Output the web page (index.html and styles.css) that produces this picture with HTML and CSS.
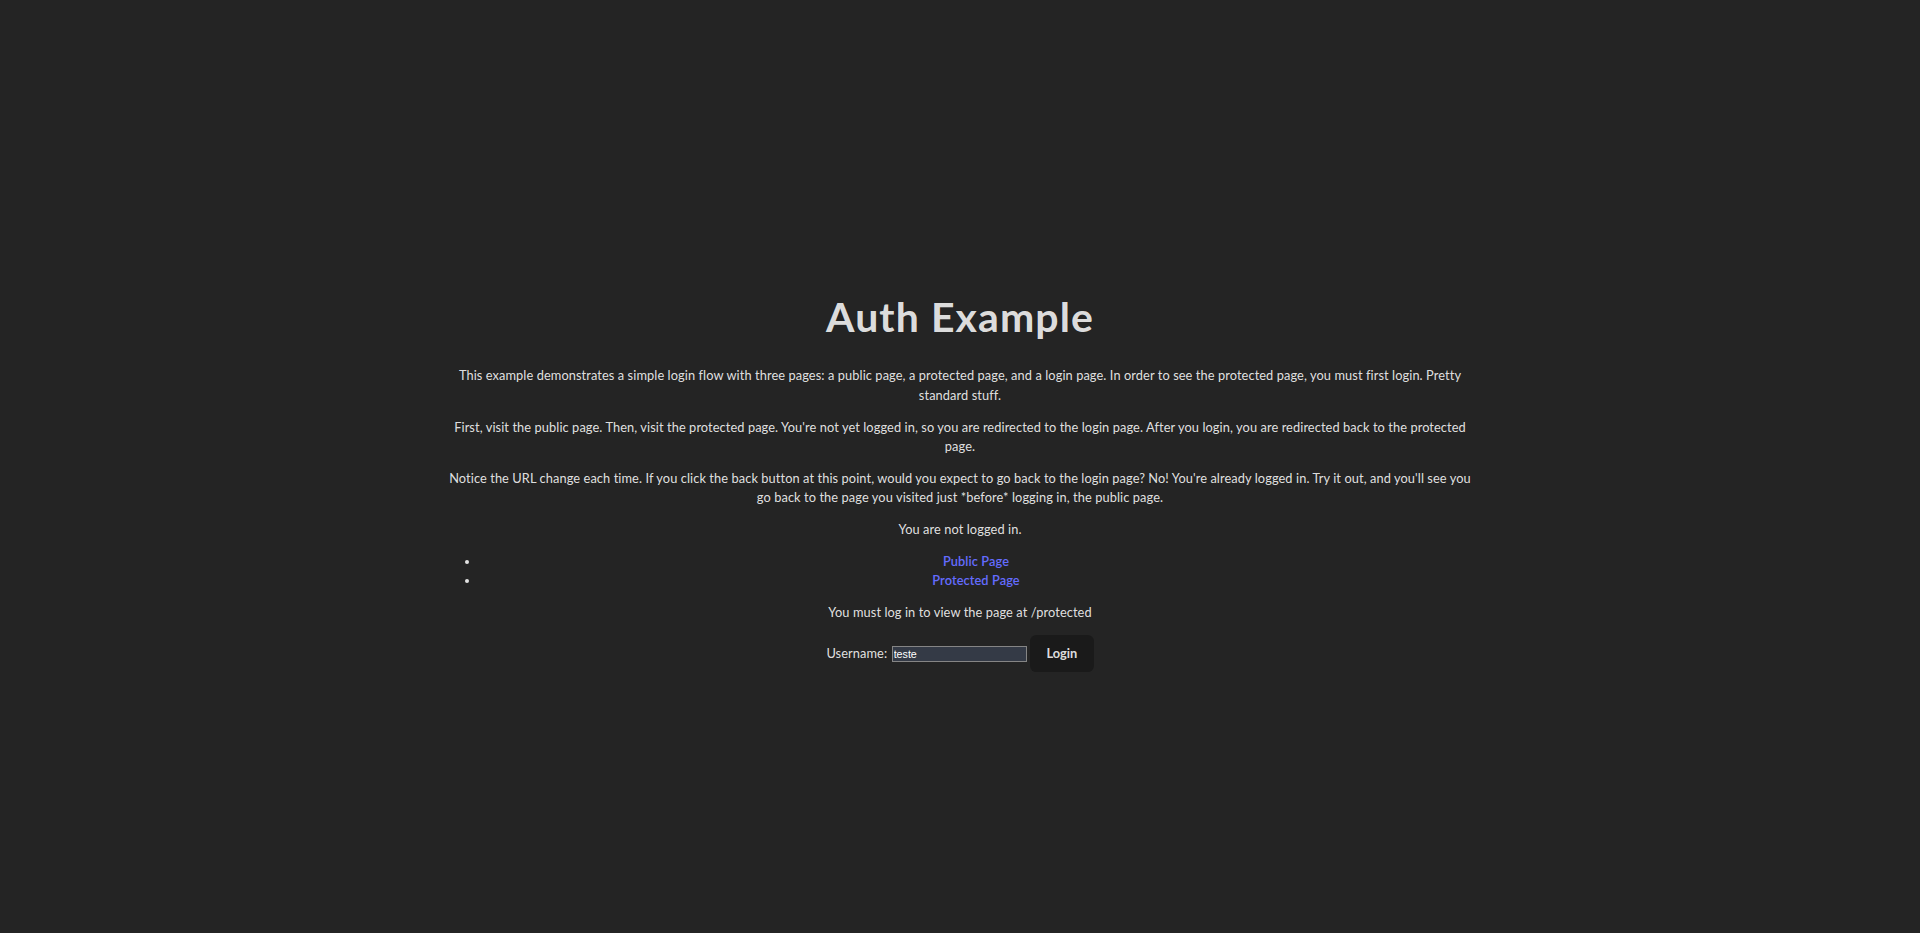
FILE: index.html
```html
<!DOCTYPE html>
<html lang="en">
<head>
<meta charset="utf-8">
<title>Auth Example</title>
<link rel="stylesheet" href="styles.css">
</head>
<body>
<div class="root">
  <h1 class="title">Auth Example</h1>
  <p class="text">This example demonstrates a simple login flow with three pages: a public page, a protected page, and a login page. In order to see the protected page, you must first login. Pretty standard stuff.</p>
  <p class="text">First, visit the public page. Then, visit the protected page. You're not yet logged in, so you are redirected to the login page. After you login, you are redirected back to the protected page.</p>
  <p class="text">Notice the URL change each time. If you click the back button at this point, would you expect to go back to the login page? No! You're already logged in. Try it out, and you'll see you go back to the page you visited just *before* logging in, the public page.</p>
  <p class="text">You are not logged in.</p>
  <ul class="nav">
    <li><a class="link" href="#/public">Public Page</a></li>
    <li><a class="link" href="#/protected">Protected Page</a></li>
  </ul>
  <div class="login">
    <p class="text">You must log in to view the page at /protected</p>
    <form class="form">
      <label class="label">Username: <input class="input" name="username" type="text" value="teste"></label> <button class="button" type="button">Login</button>
    </form>
  </div>
</div>
</body>
</html>
```

FILE: styles.css
```css
html, body {
  margin: 0;
  padding: 0;
}
body {
  background: #242424;
  color: rgba(255, 255, 255, 0.87);
  font-family: Lato, "Open Sans", sans-serif;
  font-size: 12.8px;
  line-height: 1.5;
  letter-spacing: 0.09px;
  display: flex;
  place-items: center;
  min-height: 100vh;
  min-width: 256px;
}
.root {
  max-width: 1024px;
  margin: 0 auto;
  padding: 30.6px 25.6px 25.6px;
  text-align: center;
}
.title {
  font-size: 40.96px;
  line-height: 1.1;
  font-weight: 700;
  letter-spacing: 1.1px;
  margin: 27.44px 0;
}
.text {
  margin: 12.8px 0;
}
.nav {
  margin: 12.8px 0;
  padding-left: 32px;
}
.link {
  color: #646cff;
  font-weight: 600;
  text-decoration: none;
}
.form {
  margin: 0;
}
.input {
  width: 131px;
  height: 14px;
  box-sizing: content-box;
  padding: 0 1px;
  border: 1px solid #858585;
  background: #343a46;
  color: #fff;
  font-family: "Liberation Sans", Arial, sans-serif;
  font-size: 10.7px;
  letter-spacing: 0;
  margin: 0 0 0 1px;
  vertical-align: baseline;
}
.button {
  border-radius: 6.4px;
  border: 1px solid transparent;
  padding: 7.68px 15.36px;
  font-size: 12.8px;
  font-weight: 700;
  font-family: inherit;
  line-height: 1.5;
  background: #1a1a1a;
  color: rgba(255, 255, 255, 0.87);
  cursor: pointer;
}
```
